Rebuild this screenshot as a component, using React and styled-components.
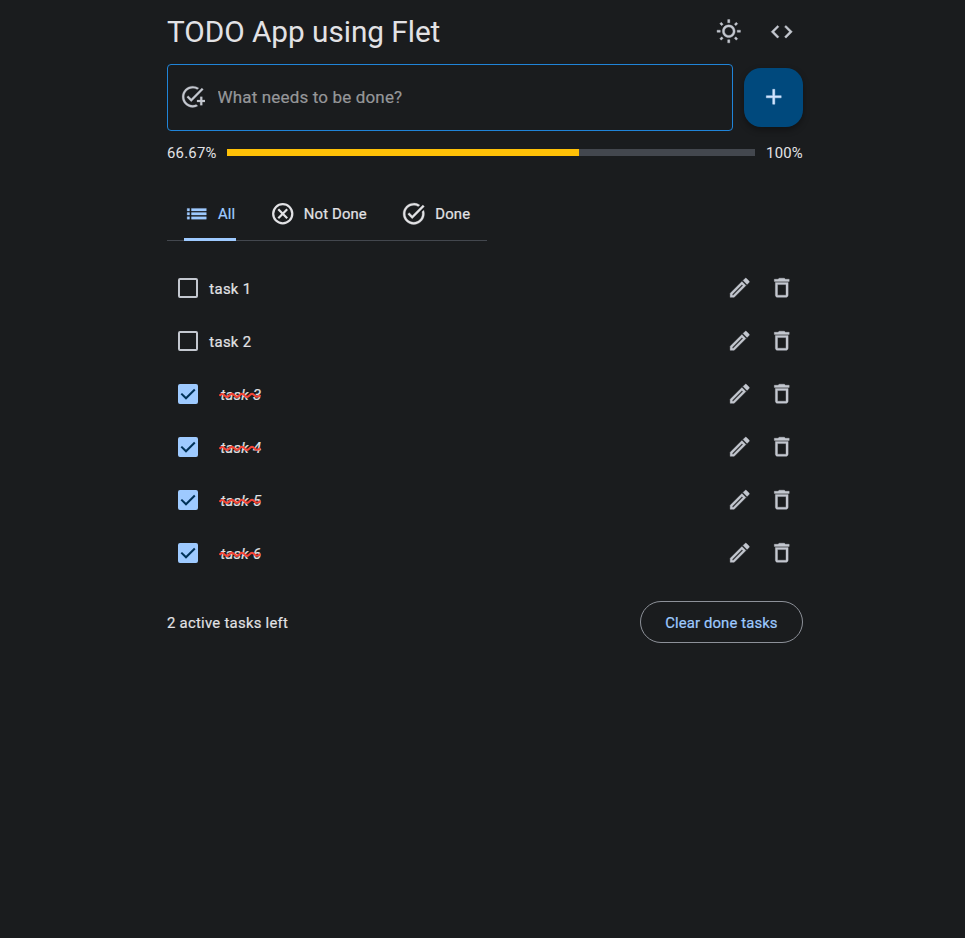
import React from "react";
import styled, { createGlobalStyle } from "styled-components";
import {
  MdOutlineWbSunny,
  MdCode,
  MdAddTask,
  MdAdd,
  MdTaskAlt,
  MdOutlineModeEdit,
  MdDeleteOutline,
} from "react-icons/md";

const Global = createGlobalStyle`
  *, *::before, *::after { box-sizing: border-box; }
  body {
    margin: 0;
    background: #1a1c1e;
    color: #e2e2e5;
    font-family: Roboto, "Liberation Sans", sans-serif;
    font-size: 14.875px;
    letter-spacing: 0.27px;
  }
  svg { flex: none; display: block; }
  svg > path[fill="none"]:first-child:not(:only-child) { stroke: none; }
`;

const Page = styled.main`
  width: 636px;
  min-height: 938px;
  margin: 0 0 0 167px;
  padding-top: 11px;
`;

const Header = styled.header`
  display: flex;
  align-items: center;
  justify-content: space-between;
  height: 42px;
`;

const Title = styled.h1`
  margin: 0;
  font-size: 29.75px;
  font-weight: 400;
  letter-spacing: -0.04px;
  line-height: 42px;
  white-space: nowrap;
`;

const Actions = styled.div`
  display: flex;
  gap: ${(p) => p.$gap}px;
`;

const BaseButton = styled.button`
  display: flex;
  align-items: center;
  justify-content: center;
  margin: 0;
  padding: 0;
  border: 0;
  background: none;
  font: inherit;
  letter-spacing: inherit;
`;

const IconButton = styled(BaseButton)`
  width: 42px;
  height: 42px;
  color: #c3c7cf;
  padding: 0 0.5px 0 0;
  svg { stroke: currentColor; stroke-width: 0.35; }
`;

const Entry = styled.form`
  display: flex;
  align-items: center;
  gap: 11px;
  margin-top: 11px;
`;

const Field = styled.label`
  display: flex;
  align-items: center;
  gap: 12.5px;
  width: 566px;
  height: 67px;
  padding: 0 0 2px 11.5px;
  border: 1px solid #2084d8;
  border-radius: 4px;
  color: #c3c7cf;
  svg { stroke: currentColor; stroke-width: 0.2; }
`;

const Input = styled.input`
  flex: 1;
  min-width: 0;
  padding: 0;
  border: 0;
  outline: 0;
  background: none;
  color: #e2e2e5;
  font: 400 17px Roboto, "Liberation Sans", sans-serif;
  letter-spacing: 0.16px;
  -webkit-text-stroke: 0.2px;
  &::placeholder { color: #96979a; opacity: 1; }
`;

const AddButton = styled(BaseButton)`
  width: 59px;
  height: 59px;
  padding: 0 0.5px 1px 0;
  border-radius: 17px;
  background: #00497d;
  color: #d1e4ff;
  box-shadow: 0 3px 6px rgba(0, 0, 0, 0.35);
  svg { stroke: currentColor; stroke-width: 0.4; }
`;

const Progress = styled.div`
  display: flex;
  align-items: center;
  height: 21px;
  margin-top: 11px;
`;

const Percent = styled.span`
  width: ${(p) => p.$width}px;
  text-align: ${(p) => p.$align || "left"};
  letter-spacing: 0.24px;
  white-space: nowrap;
`;

const Track = styled.div`
  flex: 1;
  height: 7px;
  background: #43474e;
`;

const Fill = styled.div`
  height: 100%;
  background: #ffc107;
`;

const Tabs = styled.nav`
  display: flex;
  width: 320px;
  height: 53px;
  margin-top: 25px;
  padding-left: 17px;
  gap: 34px;
  border-bottom: 1px solid #43474e;
`;

const Tab = styled(BaseButton)`
  gap: 8.5px;
  height: 53px;
  padding: 2px 0.4px 0 0;
  white-space: nowrap;
  letter-spacing: 0.15px;
  -webkit-text-stroke: 0.2px;
  color: ${(p) => (p.$active ? "#9ecaff" : "#e2e2e5")};
  border-bottom: 3px solid ${(p) => (p.$active ? "#9ecaff" : "transparent")};
  border-radius: 3px 3px 0 0;
  svg { stroke: currentColor; stroke-width: 0.3; }
`;

const List = styled.ul`
  display: flex;
  flex-direction: column;
  gap: 11px;
  margin: 26px 0 0;
  padding: 0;
  list-style: none;
`;

const Task = styled.li`
  display: flex;
  align-items: center;
  height: 42px;
`;

const Check = styled.span`
  display: flex;
  align-items: center;
  justify-content: center;
  width: 20px;
  height: 20px;
  margin-left: 11px;
  border: 2px solid ${(p) => (p.$on ? "#9ecaff" : "#c3c7cf")};
  border-radius: 2px;
  background: ${(p) => (p.$on ? "#9ecaff" : "transparent")};
`;

const TaskName = styled.span`
  flex: 1;
  padding-top: 2px;
  margin-left: ${(p) => (p.$done ? 22.4 : 11.3)}px;
  letter-spacing: 0.32px;
  -webkit-text-stroke: 0.2px;
`;

const Struck = styled.span`
  position: relative;
  font-style: italic;
  svg {
    position: absolute;
    left: -1px;
    top: 6px;
  }
`;

const Footer = styled.footer`
  display: flex;
  align-items: center;
  justify-content: space-between;
  margin-top: 27px;
`;

const Remaining = styled.span`
  padding-top: 2px;
  -webkit-text-stroke: 0.15px;
`;

const ClearButton = styled(BaseButton)`
  width: 163px;
  height: 42px;
  padding-top: 2px;
  border: 1px solid #8d9199;
  border-radius: 21px;
  color: #9ecaff;
  letter-spacing: 0.12px;
  -webkit-text-stroke: 0.2px;
`;

const ListIcon = () => (
  <svg width="25.5" height="25.5" viewBox="0 0 24 24" fill="currentColor">
    <path d="M3 7h2.2v2.3H3zM3 10.9h2.2v2.3H3zM3 14.8h2.2v2.3H3zM7 7h14v2.3H7zM7 10.9h14v2.3H7zM7 14.8h14v2.3H7z" />
  </svg>
);

const CancelIcon = () => (
  <svg width="25.5" height="25.5" viewBox="0 0 24 24">
    <g fill="none" stroke="currentColor" strokeWidth="2.1">
      <circle cx="12" cy="12" r="9" />
      <path d="M7.8 7.8l8.4 8.4M16.2 7.8l-8.4 8.4" />
    </g>
  </svg>
);

const CheckMark = () => (
  <svg width="20" height="20" viewBox="0 0 20 20">
    <path d="M3.3 9.6L8 14.3L16.8 5.5" fill="none" stroke="#003258" strokeWidth="2" />
  </svg>
);

const Wave = () => (
  <svg width="43" height="7" viewBox="0 0 43 7">
    <path
      d="M0.5 3.8Q3 0.4 5.5 3.4T10.5 3.4T15.5 3.4T20.5 3.4T25.5 3.4T30.5 3.4T35.5 3.4T41.5 3"
      fill="none"
      stroke="#f44336"
      strokeWidth="2.1"
    />
  </svg>
);

const tasks = [1, 2, 3, 4, 5, 6].map((n) => ({ name: `task ${n}`, done: n > 2 }));

export default function App() {
  return (
    <>
      <Global />
      <Page>
        <Header>
          <Title>TODO App using Flet</Title>
          <Actions $gap={11}>
            <IconButton aria-label="Theme"><MdOutlineWbSunny size={25.5} /></IconButton>
            <IconButton aria-label="Source"><MdCode size={25.5} /></IconButton>
          </Actions>
        </Header>
        <Entry>
          <Field>
            <MdAddTask size={25.5} />
            <Input placeholder="What needs to be done?" />
          </Field>
          <AddButton type="button" aria-label="Add"><MdAdd size={25.5} /></AddButton>
        </Entry>
        <Progress>
          <Percent $width={60}>66.67%</Percent>
          <Track><Fill style={{ width: "66.67%" }} /></Track>
          <Percent $width={48} $align="right">100%</Percent>
        </Progress>
        <Tabs>
          <Tab $active><ListIcon />All</Tab>
          <Tab><CancelIcon />Not Done</Tab>
          <Tab><MdTaskAlt size={25.5} />Done</Tab>
        </Tabs>
        <List>
          {tasks.map((t) => (
            <Task key={t.name}>
              <Check $on={t.done}>{t.done && <CheckMark />}</Check>
              <TaskName $done={t.done}>
                {t.done ? <Struck>{t.name}<Wave /></Struck> : t.name}
              </TaskName>
              <Actions $gap={0}>
                <IconButton aria-label="Edit"><MdOutlineModeEdit size={25.5} /></IconButton>
                <IconButton aria-label="Delete"><MdDeleteOutline size={25.5} /></IconButton>
              </Actions>
            </Task>
          ))}
        </List>
        <Footer>
          <Remaining>2 active tasks left</Remaining>
          <ClearButton>Clear done tasks</ClearButton>
        </Footer>
      </Page>
    </>
  );
}
